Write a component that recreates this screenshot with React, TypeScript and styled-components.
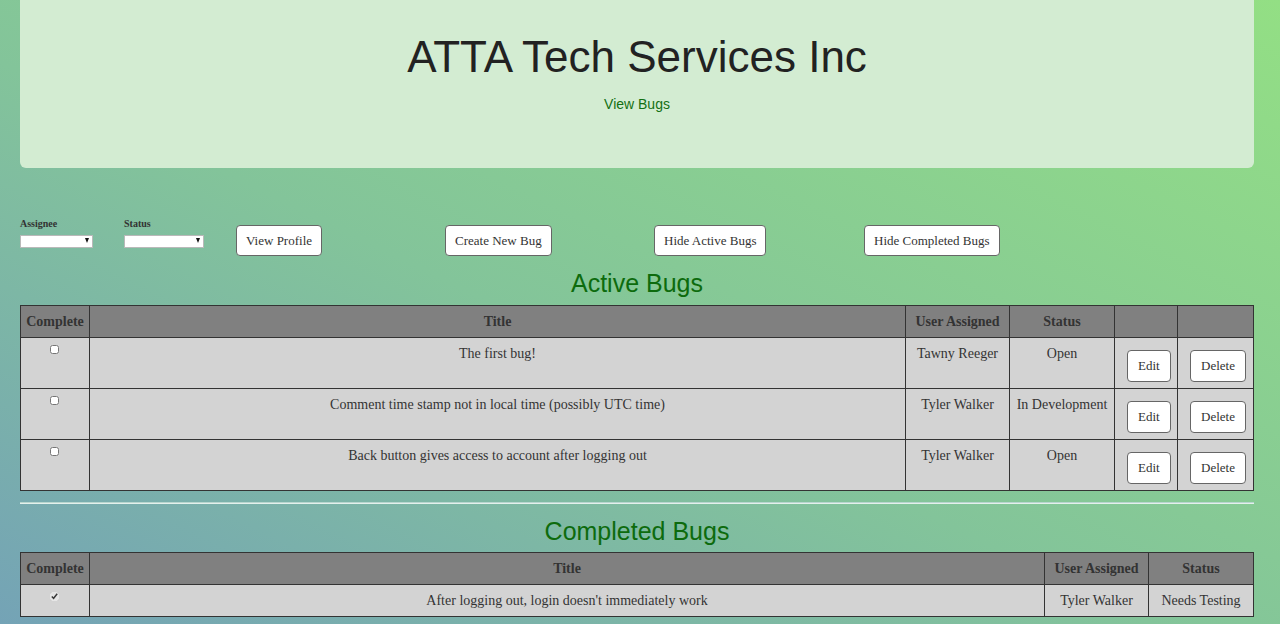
import React from 'react';
import styled, { createGlobalStyle } from 'styled-components';

const GlobalStyle = createGlobalStyle`
    html, body {
        margin: 0;
        padding: 0;
    }
    body {
        min-height: 100vh;
        background: linear-gradient(to top right, #74a3b6 0%, #83c49a 45%, #93df84 100%);
        background-attachment: fixed;
        font-family: "Liberation Serif", "Times New Roman", serif;
        color: #333;
    }
`;

const Page = styled.div`
    padding: 0 26px 0 20px;
`;

const Jumbotron = styled.header`
    background-color: #d3ecd2;
    border-radius: 0 0 6px 6px;
    padding: 33px 0 54px;
    text-align: center;
    font-family: "Liberation Sans", Arial, sans-serif;
`;

const Title = styled.h1`
    margin: 0 0 13px;
    font-size: 44px;
    line-height: 1.1;
    font-weight: 400;
    color: #222;
`;

const NavLink = styled.a`
    display: inline-block;
    font-size: 14px;
    line-height: 20px;
    color: #137013;
    text-decoration: none;
`;

const Controls = styled.div`
    display: grid;
    grid-template-columns: 104px 112px 209px 209px 210px auto;
    align-items: start;
    margin-top: 50px;
`;

const Field = styled.div`
    display: flex;
    flex-direction: column;
    gap: 4px;
`;

const FieldLabel = styled.label`
    font-size: 10px;
    line-height: 12px;
    font-weight: 700;
    color: #333;
`;

const SelectWrap = styled.div<{ $width: number }>`
    position: relative;
    width: ${(p) => p.$width}px;
    height: 13px;

    &::after {
        content: '';
        position: absolute;
        right: 4px;
        top: 4px;
        border-left: 2.5px solid transparent;
        border-right: 2.5px solid transparent;
        border-top: 5px solid #111;
        pointer-events: none;
    }
`;

const Select = styled.select`
    appearance: none;
    box-sizing: border-box;
    width: 100%;
    height: 100%;
    margin: 0;
    padding: 0;
    border: 1px solid #b9b9b9;
    border-radius: 0;
    background: #fff;
`;

const Button = styled.button<{ $top?: boolean }>`
    box-sizing: border-box;
    height: ${(p) => (p.$top ? 31 : 32)}px;
    margin: ${(p) => (p.$top ? '7px 0 0 0' : '6px 0 0 6px')};
    padding: 0 ${(p) => (p.$top ? 9 : 10)}px;
    background: #fff;
    border: 1px solid #666;
    border-radius: 4px;
    font-family: "Liberation Serif", "Times New Roman", serif;
    font-size: 13px;
    color: #333;
    cursor: pointer;
    white-space: nowrap;
`;

const SectionTitle = styled.h2<{ $top: number; $bottom: number }>`
    margin: ${(p) => p.$top}px 0 ${(p) => p.$bottom}px;
    text-align: center;
    font-family: "Liberation Sans", Arial, sans-serif;
    font-size: 25px;
    line-height: 1.1;
    font-weight: 400;
    color: #0d6b0d;
`;

const Table = styled.table`
    width: 100%;
    table-layout: fixed;
    border-collapse: collapse;
    border: 1px solid #333;
    font-size: 14px;
    line-height: 19px;
`;

const Th = styled.th`
    background-color: #808080;
    border: 1px solid #333;
    padding: 6px 4px;
    font-weight: 700;
    color: #333;
    text-align: center;
`;

const Td = styled.td<{ $btn?: boolean }>`
    background-color: #d3d3d3;
    border: 1px solid #333;
    padding: 6px ${(p) => (p.$btn ? '0 6px 6px' : '4px')};
    vertical-align: top;
    text-align: ${(p) => (p.$btn ? 'left' : 'center')};
    color: #333;
`;

const Check = styled.input.attrs({ type: 'checkbox' })`
    display: block;
    width: 9px;
    height: 9px;
    margin: 1px auto 0;
    position: relative;
    left: -1px;
    accent-color: #e6e6e6;
`;

const Rule = styled.hr`
    margin: 11px 0 14px;
    border: 0;
    border-top: 1px solid #b8d6cf;
    border-bottom: 1px solid #e4f0ec;
`;

type Bug = { title: string; user: string; status: string };

const activeBugs: Bug[] = [
    { title: 'The first bug!', user: 'Tawny Reeger', status: 'Open' },
    { title: 'Comment time stamp not in local time (possibly UTC time)', user: 'Tyler Walker', status: 'In Development' },
    { title: 'Back button gives access to account after logging out', user: 'Tyler Walker', status: 'Open' },
];

const completedBugs: Bug[] = [
    { title: "After logging out, login doesn't immediately work", user: 'Tyler Walker', status: 'Needs Testing' },
];

const App: React.FC = () => {
    return (
        <>
            <GlobalStyle />
            <Page>
                <Jumbotron>
                    <Title>ATTA Tech Services Inc</Title>
                    <NavLink href="#">View Bugs</NavLink>
                </Jumbotron>

                <Controls>
                    <Field>
                        <FieldLabel>Assignee</FieldLabel>
                        <SelectWrap $width={73}>
                            <Select />
                        </SelectWrap>
                    </Field>
                    <Field>
                        <FieldLabel>Status</FieldLabel>
                        <SelectWrap $width={80}>
                            <Select />
                        </SelectWrap>
                    </Field>
                    <div><Button $top>View Profile</Button></div>
                    <div><Button $top>Create New Bug</Button></div>
                    <div><Button $top>Hide Active Bugs</Button></div>
                    <div><Button $top>Hide Completed Bugs</Button></div>
                </Controls>

                <SectionTitle $top={14} $bottom={7}>Active Bugs</SectionTitle>
                <Table>
                    <colgroup>
                        <col style={{ width: 69 }} />
                        <col />
                        <col style={{ width: 104 }} />
                        <col style={{ width: 105 }} />
                        <col style={{ width: 63 }} />
                        <col style={{ width: 76 }} />
                    </colgroup>
                    <thead>
                        <tr>
                            <Th>Complete</Th>
                            <Th>Title</Th>
                            <Th>User Assigned</Th>
                            <Th>Status</Th>
                            <Th />
                            <Th />
                        </tr>
                    </thead>
                    <tbody>
                        {activeBugs.map((bug) => (
                            <tr key={bug.title}>
                                <Td><Check /></Td>
                                <Td>{bug.title}</Td>
                                <Td>{bug.user}</Td>
                                <Td>{bug.status}</Td>
                                <Td $btn><Button>Edit</Button></Td>
                                <Td $btn><Button>Delete</Button></Td>
                            </tr>
                        ))}
                    </tbody>
                </Table>

                <Rule />

                <SectionTitle $top={0} $bottom={7}>Completed Bugs</SectionTitle>
                <Table>
                    <colgroup>
                        <col style={{ width: 69 }} />
                        <col />
                        <col style={{ width: 104 }} />
                        <col style={{ width: 105 }} />
                    </colgroup>
                    <thead>
                        <tr>
                            <Th>Complete</Th>
                            <Th>Title</Th>
                            <Th>User Assigned</Th>
                            <Th>Status</Th>
                        </tr>
                    </thead>
                    <tbody>
                        {completedBugs.map((bug) => (
                            <tr key={bug.title}>
                                <Td><Check defaultChecked /></Td>
                                <Td>{bug.title}</Td>
                                <Td>{bug.user}</Td>
                                <Td>{bug.status}</Td>
                            </tr>
                        ))}
                    </tbody>
                </Table>
            </Page>
        </>
    );
};

export default App;
